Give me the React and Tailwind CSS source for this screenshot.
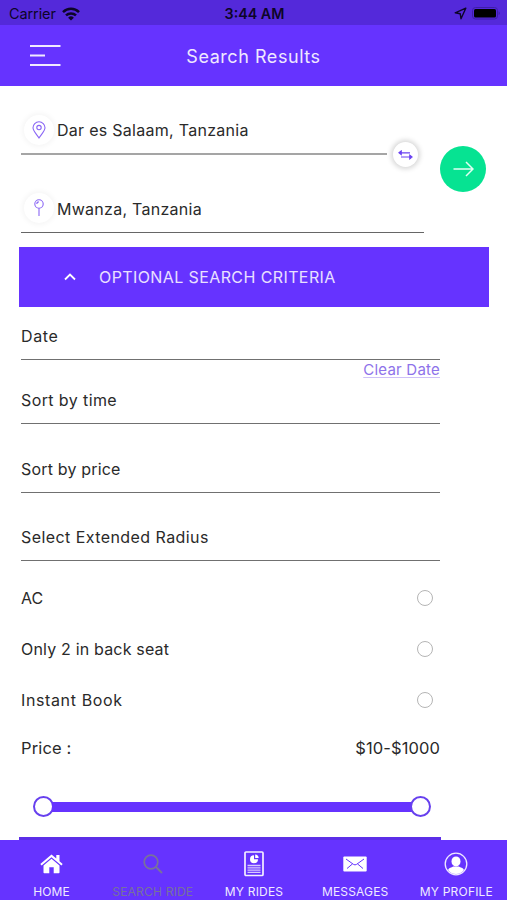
import React, { useState } from 'react';
import clsx from 'clsx';

const fields = [
    { label: 'Sort by time', height: 'h-[48px]', tracking: 'tracking-[0.4px]' },
    { label: 'Sort by price', height: 'h-[69px]', tracking: 'tracking-[0.18px]' },
    { label: 'Select Extended Radius', height: 'h-[68px]', tracking: 'tracking-[0.43px]' },
];

const options = [
    { label: 'AC', tracking: 'tracking-[0px]' },
    { label: 'Only 2 in back seat', tracking: 'tracking-[0.18px]' },
    { label: 'Instant Book', tracking: 'tracking-[0.62px]' },
];

const StatusBar = () => (
    <div className="grid grid-cols-3 items-center h-[25px] bg-[#5429da] pl-[9px] pr-[7px] pt-0.5 text-[#0d0528]">
        <div className="flex items-center gap-[6px]">
            <span className="text-[14.5px] leading-5 tracking-[-0.1px]">Carrier</span>
            <svg width="18" height="14" viewBox="0 0 18 14" fill="none" stroke="currentColor" strokeWidth="2.5">
                <path d="M1 5.1a11.5 11.5 0 0 1 16 0" />
                <path d="M4 8.4a7.2 7.2 0 0 1 10 0" />
                <path d="M9 13.5 6.1 10.7a4.2 4.2 0 0 1 5.8 0z" fill="currentColor" stroke="none" />
            </svg>
        </div>
        <span className="text-center text-[14.3px] leading-5 font-semibold whitespace-nowrap">3:44 AM</span>
        <div className="flex items-center justify-end gap-[5px]">
            <svg width="13" height="13" viewBox="0 0 13 13" fill="none" stroke="currentColor" strokeWidth="1.4" strokeLinejoin="round">
                <path d="M11.8 1.2 1.2 5.8l5 .9.8 5z" />
            </svg>
            <svg width="28" height="13" viewBox="0 0 28 13">
                <rect x="0.5" y="0.5" width="25" height="11.5" rx="3" fill="none" stroke="#3e1ea8" />
                <rect x="2" y="2" width="22" height="8.5" rx="1.5" fill="#000" />
                <path d="M26.6 4.5v3.6c.8-.3 1.2-1 1.2-1.8s-.4-1.5-1.2-1.8z" fill="#3e1ea8" />
            </svg>
        </div>
    </div>
);

const Header = () => (
    <header className="grid grid-cols-3 items-center h-[61px] bg-[#6633ff] px-[30px]">
        <button className="w-[31px]" aria-label="Menu">
            <svg width="31" height="23" viewBox="0 0 31 23" stroke="#f1eaff" strokeWidth="2">
                <path d="M0 2h30.5M0 11.5h15M0 21h30.5" />
            </svg>
        </button>
        <h1 className="pt-px text-center text-[18px] tracking-[0.55px] text-[#efe8ff] whitespace-nowrap">Search Results</h1>
    </header>
);

const PlaceIcon = ({ children }) => (
    <span className="flex items-center justify-center w-[30px] h-[30px] rounded-full bg-white shadow-[0_0_5px_2px_rgba(0,0,0,0.04)]">
        <svg width="14" height="18" viewBox="0 0 14 18" fill="none" stroke="#8a66f5" strokeWidth="1.1">
            {children}
        </svg>
    </span>
);

const SearchForm = () => (
    <section className="relative h-[161px] pl-[21px]">
        <div className="flex items-center gap-[3px] w-[366px] h-[69px] pt-[20px] pl-[3px] border-b-2 border-[#a5a5a5]">
            <PlaceIcon>
                <path d="M7 17C4.2 12.9 1 9.7 1 6.8a6 6 0 0 1 12 0C13 9.7 9.8 12.9 7 17z" />
                <circle cx="7" cy="6.6" r="2.2" />
            </PlaceIcon>
            <span className="pt-px text-[16px] tracking-[0.28px]">Dar es Salaam, Tanzania</span>
        </div>
        <div className="flex items-center gap-[3px] w-[403px] h-[78px] pt-[29px] pl-[3px] border-b border-[#666]">
            <PlaceIcon>
                <circle cx="7" cy="5" r="4.2" />
                <path d="M7 9.2V17M4.8 5c0-1.2.8-2.1 2-2.1" />
            </PlaceIcon>
            <span className="pt-px text-[16px] tracking-[0.27px]">Mwanza, Tanzania</span>
        </div>
        {/* swap and submit float over the two inputs */}
        <button aria-label="Swap" className="absolute left-[393px] top-[56px] flex items-center justify-center w-[25px] h-[25px] rounded-full bg-white shadow-[0_0_5px_2px_rgba(0,0,0,0.16)]">
            <svg width="15" height="10" viewBox="0 0 15 10" fill="#6b43f2" stroke="#6b43f2" strokeWidth="1.2">
                <path d="M3 2.8h9M3 7h9" />
                <path d="M1 2.8 3.2 1v3.6zM14 7l-2.200-1.8v3.6z" />
            </svg>
        </button>
        <button aria-label="Search" className="absolute left-[440px] top-[60px] flex items-center justify-center w-[46px] h-[46px] rounded-full bg-[#06e392]">
            <svg width="21" height="16" viewBox="0 0 21 16" fill="none" stroke="#e2fff3" strokeWidth="1.5">
                <path d="M0.5 8H20M13 1l7 7-7 7" />
            </svg>
        </button>
    </section>
);

const Slider = () => (
    <div className="flex items-center h-5 mt-[37px] ml-[12px] w-[398px]">
        <span className="w-[21px] h-[21px] shrink-0 rounded-full border-2 border-[#6740ee] bg-white" />
        <span className="flex-1 h-[10px] -mx-0.5 bg-[#6633ff]" />
        <span className="w-[21px] h-[21px] shrink-0 rounded-full border-2 border-[#6740ee] bg-white" />
    </div>
);

const HomeIcon = () => (
    <svg width="23" height="20" viewBox="0 0 23 20" fill="#fff">
        <path d="M11.5 0.5 0.3 10l1.3 1.5 9.9-8.3 9.9 8.3 1.3-1.5-3.2-2.7V1h-3.2v3.6z" />
        <path d="M11.5 4.7 3.5 11.4V18.5c0 .5.3.8.8.8h5v-6h4.4v6h5c.5 0 .8-.3.8-.8v-7.1z" />
    </svg>
);

const SearchIcon = () => (
    <svg width="20" height="20" viewBox="0 0 20 20" fill="none" stroke="#78729b" strokeWidth="1.7">
        <circle cx="8" cy="8" r="6.8" />
        <path d="m13 13 6 6" strokeWidth="2" />
    </svg>
);

const RidesIcon = () => (
    <svg width="20" height="26" viewBox="0 0 20 26" fill="none" stroke="#f4efff">
        <rect x="1" y="1" width="18" height="23.5" rx="1" strokeWidth="1.7" />
        <path d="M10 4.2a4 4 0 1 0 4 4h-4z" fill="#fff" stroke="none" />
        <path d="M11.2 3.5a4 4 0 0 1 3.5 3.5h-3.5z" fill="#fff" stroke="none" />
        <path d="M3.500 14.5h13M3.5 16.8h13M3.5 19.1h13M3.5 21.4h13" strokeWidth="1.3" opacity="0.8" />
    </svg>
);

const MessagesIcon = () => (
    <svg width="24" height="16" viewBox="0 0 24 16">
        <rect x="0.3" y="0.5" width="23.4" height="15" rx="1" fill="#fff" />
        <path d="M3 3 10.500 8.400q1.500 1 3 0L21 3M4 12.500l5.500-4.600M20 12.500l-5.500-4.600" fill="none" stroke="#6633ff" strokeWidth="1" />
    </svg>
);

const ProfileIcon = () => (
    <svg width="24" height="24" viewBox="0 0 24 24" fill="#fff">
        <circle cx="12" cy="12" r="10.8" fill="none" stroke="#efe9ff" strokeWidth="1.3" />
        <ellipse cx="12" cy="9.4" rx="4.5" ry="5" />
        <path d="M4 18c1-2.5 3.5-2.4 5.2-3.500h5.6c1.7 1.1 4.2 1 5.2 3.500a10 10 0 0 1-16 0z" />
    </svg>
);

const tabs = [
    { label: 'HOME', icon: HomeIcon, tracking: 'tracking-[0.15px]' },
    { label: 'SEARCH RIDE', icon: SearchIcon, tracking: 'tracking-[0.2px]', active: true },
    { label: 'MY RIDES', icon: RidesIcon, tracking: 'tracking-[0.2px]' },
    { label: 'MESSAGES', icon: MessagesIcon, tracking: 'tracking-[0.15px]' },
    { label: 'MY PROFILE', icon: ProfileIcon, tracking: 'tracking-[0.2px]' },
];

const TabBar = () => (
    <nav className="grid grid-cols-5 h-[60px] pl-px bg-[#6633ff]">
        {tabs.map(({ label, icon: Icon, tracking, active }) => (
            <div key={label} className="flex flex-col items-center pt-[10px]">
                <span className="flex items-center justify-center h-[27px]"><Icon /></span>
                <span className={clsx('mt-[7px] text-[12px] leading-4 whitespace-nowrap', tracking, active ? 'text-[#77719c]' : 'text-[#f0eaff]')}>
                    {label}
                </span>
            </div>
        ))}
    </nav>
);

const App = () => {
    const [open, setOpen] = useState(true);
    const [selected, setSelected] = useState([]);

    const toggle = (label) => {
        setSelected(selected.includes(label) ? selected.filter((l) => l !== label) : [...selected, label]);
    };

    return (
        <div className="flex flex-col w-[507px] h-[900px] overflow-hidden bg-white font-['Inter',sans-serif] text-[#2a2a2a]">
            <StatusBar />
            <Header />
            <SearchForm />
            <button
                onClick={() => setOpen(!open)}
                className="flex items-center h-[60px] ml-[19px] w-[470px] pl-[45px] bg-[#6633ff] text-[#e9e0ff]"
            >
                <svg width="12" height="8" viewBox="0 0 12 8" fill="none" stroke="#fff" strokeWidth="1.8">
                    <path d="m1 6.500 5-5 5 5" />
                </svg>
                <span className="ml-[23px] text-[16px] tracking-[0.4px]">OPTIONAL SEARCH CRITERIA</span>
            </button>
            <div className={clsx('flex-1 w-[440px] pl-[21px]', !open && 'invisible')}>
                <div className="flex items-end h-[53px] pb-[11px] border-b border-[#707070] text-[16px] tracking-[0.6px]">Date</div>
                <div className="flex justify-end h-4">
                    <button className="h-5 text-[15px] leading-5 tracking-[0.22px] text-[#8e72ea] underline decoration-[#cfc1f8] underline-offset-2">Clear Date</button>
                </div>
                {fields.map((f) => (
                    <div key={f.label} className={clsx('flex items-end pb-[11px] border-b border-[#707070] text-[16px]', f.height, f.tracking)}>
                        {f.label}
                    </div>
                ))}
                <div className="pt-[11px]">
                    {options.map((o) => (
                        <div key={o.label} className="flex items-center justify-between h-[51.3px] pr-[7px]">
                            <span className={clsx('text-[16px]', o.tracking)}>{o.label}</span>
                            <button
                                aria-label={o.label}
                                onClick={() => toggle(o.label)}
                                className={clsx('w-4 h-4 rounded-full border-[1.5px] border-[#b5b5b5]', selected.includes(o.label) && 'bg-[#6633ff]')}
                            />
                        </div>
                    ))}
                </div>
                <div className="flex justify-between mt-[10px] text-[16.5px] leading-6">
                    <span className="tracking-[0.15px]">Price :</span>
                    <span className="tracking-[0.1px]">$10-$1000</span>
                </div>
                <Slider />
            </div>
            <div className="h-[3px] ml-[19px] w-[422px] bg-[#5c2ee8]" />
            <TabBar />
        </div>
    );
};

export default App;
